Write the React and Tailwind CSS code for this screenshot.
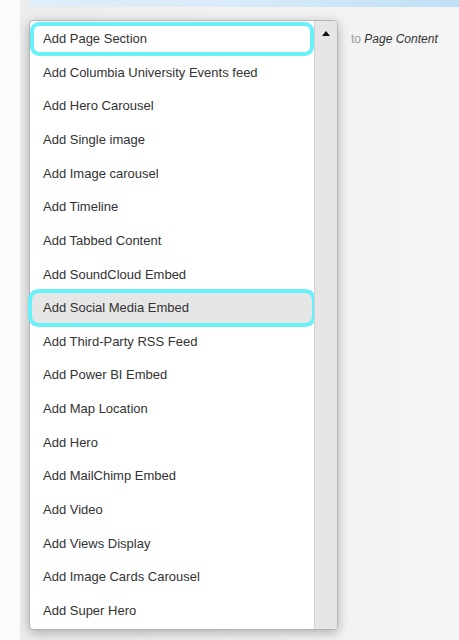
import React from 'react';

const items = [
    'Add Page Section',
    'Add Columbia University Events feed',
    'Add Hero Carousel',
    'Add Single image',
    'Add Image carousel',
    'Add Timeline',
    'Add Tabbed Content',
    'Add SoundCloud Embed',
    'Add Social Media Embed',
    'Add Third-Party RSS Feed',
    'Add Power BI Embed',
    'Add Map Location',
    'Add Hero',
    'Add MailChimp Embed',
    'Add Video',
    'Add Views Display',
    'Add Image Cards Carousel',
    'Add Super Hero',
];

const App = () => {
    return (
        <div className="flex w-full h-[640px] overflow-hidden font-['Liberation_Sans',Arial,sans-serif] text-[#333]">
            {/* Left page edge */}
            <div className="w-[20px] shrink-0 bg-[#fbfbfb]" />

            {/* Main area */}
            <div className="flex-1 flex flex-col bg-gradient-to-r from-[#ededed] via-[#f2f2f2] to-[#f4f4f4]">
                <div className="h-[7px] ml-[9px] bg-gradient-to-r from-[#dfeef9] via-[#d8ebf8] to-[#bfe0f6]" />

                <div className="flex items-start pl-[9px] pt-[13px]">
                    {/* Dropdown */}
                    <div className="flex w-[309px] h-[610px] bg-white border border-[#b5b5b5] rounded-[4px] shadow-[0_3px_12px_rgba(0,0,0,0.28)]">
                        <ul className="flex-1 pt-[1px]">
                            {items.map((label, i) => (
                                <li
                                    key={label}
                                    className={
                                        i === 0
                                            ? 'h-[33.65px] flex items-center pl-[13px] text-[13px] rounded-[9px] outline-4 outline-[#68f0fb] -outline-offset-4'
                                            : i === 8
                                                ? 'h-[33.65px] flex items-center pl-[13px] text-[13px] rounded-[9px] bg-[#e6e6e6] outline-4 outline-[#68f0fb] -outline-offset-2'
                                                : 'h-[33.65px] flex items-center pl-[13px] text-[13px]'
                                    }
                                >
                                    {label}
                                </li>
                            ))}
                        </ul>

                        {/* Scrollbar */}
                        <div className="w-[23px] shrink-0 bg-[#e6e6e6] border-l border-[#d2d2d2] rounded-r-[3px] flex justify-center pt-[10px]">
                            <svg width="8" height="5" viewBox="0 0 8 5">
                                <polygon points="4,0 8,5 0,5" fill="#111" />
                            </svg>
                        </div>
                    </div>

                    <div className="pl-[13px] pt-[10px] text-[12px] whitespace-nowrap">
                        <span className="text-[#9a9a9a]">to </span>
                        <em className="text-[#333]">Page Content</em>
                    </div>
                </div>
            </div>
        </div>
    );
};

export default App;
